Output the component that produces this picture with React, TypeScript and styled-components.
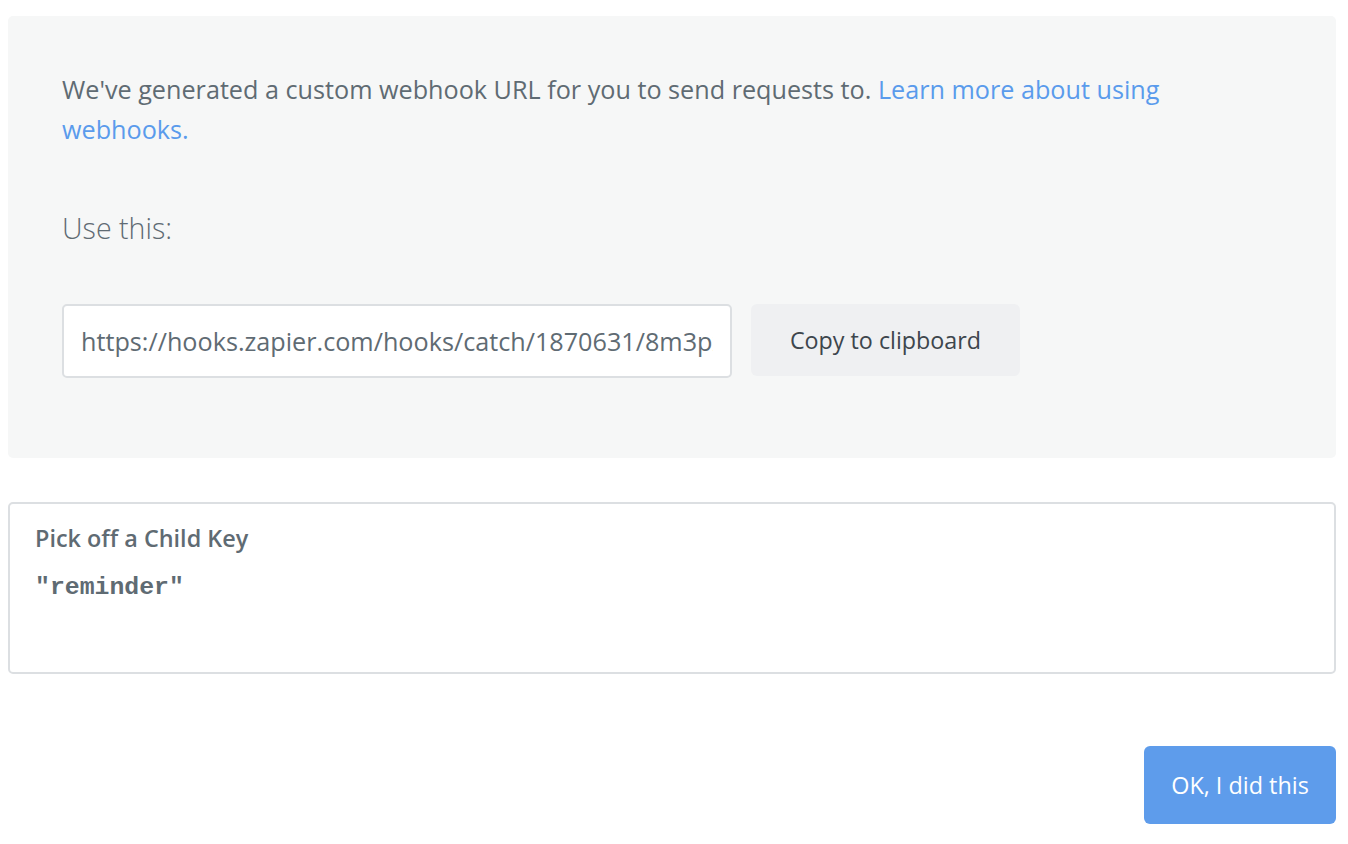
import React from 'react';
import styled, { createGlobalStyle } from 'styled-components';

const Color = {
    Text: '#5f6b73',
    Dark: '#3d464d',
    Link: '#5a9bec',
    Panel: '#f6f7f7',
    Border: '#dcdfe2',
    ButtonGrey: '#eff0f2',
    Blue: '#5e9ceb',
    White: '#ffffff',
};

const GlobalStyle = createGlobalStyle`
    body {
        margin: 0;
        background: ${Color.White};
        font-family: "Open Sans", "Liberation Sans", sans-serif;
        color: ${Color.Text};
    }
`;

const Page = styled.div`
    padding: 16px 12px 20px 8px;
    display: flex;
    flex-direction: column;
`;

const Panel = styled.section`
    background: ${Color.Panel};
    border-radius: 5px;
    padding: 53px 54px 80px;
`;

const Intro = styled.p`
    margin: 0;
    font: 400 25.2px/40px "Open Sans", sans-serif;
    color: ${Color.Text};
    max-width: 1120px;
`;

const Link = styled.a`
    color: ${Color.Link};
    text-decoration: none;
`;

const Label = styled.p`
    margin: 61px 0 0;
    font: 300 28.6px/36px "Open Sans", sans-serif;
    color: ${Color.Text};
`;

const UrlRow = styled.div`
    display: flex;
    align-items: flex-start;
    gap: 19px;
    margin-top: 58px;
`;

const UrlField = styled.input`
    box-sizing: border-box;
    width: 670px;
    height: 74px;
    padding: 0 17px;
    border: 2px solid ${Color.Border};
    border-radius: 5px;
    background: ${Color.White};
    color: ${Color.Text};
    font: 400 25.2px "Open Sans", sans-serif;
    outline: none;
`;

const GreyButton = styled.button`
    box-sizing: border-box;
    width: 269px;
    height: 72px;
    border: 0;
    border-radius: 6px;
    background: ${Color.ButtonGrey};
    color: ${Color.Dark};
    font: 400 23.3px "Open Sans", sans-serif;
    cursor: pointer;
`;

const Card = styled.section`
    box-sizing: border-box;
    margin-top: 44px;
    height: 172px;
    border: 2px solid ${Color.Border};
    border-radius: 5px;
    padding: 16px 25px;
`;

const CardTitle = styled.h3`
    margin: 0;
    font: 600 23.4px/36px "Open Sans", sans-serif;
    color: ${Color.Text};
`;

const Code = styled.code`
    display: block;
    margin-top: 16px;
    font: 700 24.8px/30px "Liberation Mono", "Courier New", monospace;
    color: ${Color.Text};
`;

const Footer = styled.div`
    display: flex;
    justify-content: flex-end;
    margin-top: 72px;
`;

const PrimaryButton = styled.button`
    box-sizing: border-box;
    width: 192px;
    height: 78px;
    border: 0;
    border-radius: 6px;
    background: ${Color.Blue};
    color: ${Color.White};
    font: 400 23.4px "Open Sans", sans-serif;
    cursor: pointer;
`;

export default function App() {
    return (
        <>
            <GlobalStyle />
            <Page>
                <Panel>
                    <Intro>
                        We've generated a custom webhook URL for you to send requests to.{' '}
                        <Link href="#">Learn more about using webhooks.</Link>
                    </Intro>
                    <Label>Use this:</Label>
                    <UrlRow>
                        <UrlField
                            readOnly
                            value="https://hooks.zapier.com/hooks/catch/1870631/8m3pxq/"
                        />
                        <GreyButton>Copy to clipboard</GreyButton>
                    </UrlRow>
                </Panel>
                <Card>
                    <CardTitle>Pick off a Child Key</CardTitle>
                    <Code>"reminder"</Code>
                </Card>
                <Footer>
                    <PrimaryButton>OK, I did this</PrimaryButton>
                </Footer>
            </Page>
        </>
    );
}
